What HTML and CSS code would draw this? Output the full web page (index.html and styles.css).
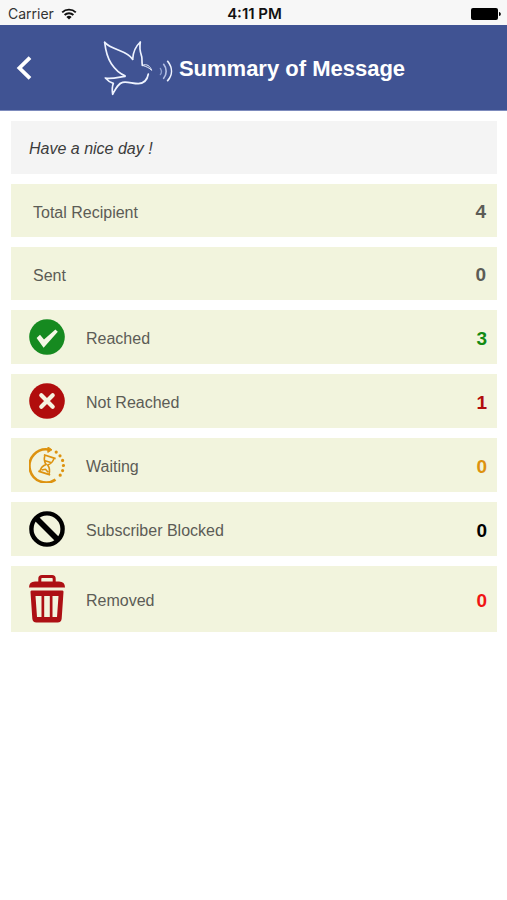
FILE: index.html
```html
<!DOCTYPE html>
<html lang="en">
<head>
<meta charset="utf-8">
<meta name="viewport" content="width=device-width, initial-scale=1">
<title>Summary of Message</title>
<link rel="stylesheet" href="styles.css">
</head>
<body>
<div class="status">
  <div class="carrier">
    <span>Carrier</span>
    <svg class="wifi" viewBox="0 0 16 12" aria-hidden="true">
      <path d="M1.2 4.4a9.8 9.8 0 0 1 13.6 0M3.6 7a6.3 6.3 0 0 1 8.8 0" fill="none" stroke="#111" stroke-width="1.9"/>
      <path d="M8 11.5 5.4 8.9a3.8 3.8 0 0 1 5.2 0z" fill="#111"/>
    </svg>
  </div>
  <time class="clock">4:11 PM</time>
  <svg class="battery" viewBox="0 0 30 12" aria-hidden="true">
    <rect width="27" height="12" rx="2"/>
    <path d="M28 4c2.4 0 2.4 4 0 4z"/>
  </svg>
</div>
<header class="bar">
  <button class="back" type="button" aria-label="Back">
    <svg viewBox="0 0 16 24" aria-hidden="true"><path d="M14 1.6 3.4 12 14 22.4" fill="none" stroke="#fff" stroke-width="3.8"/></svg>
  </button>
  <div class="brand">
    <svg class="bird" viewBox="30 30 213 168" fill="none" stroke="#eef3ff" stroke-linecap="round" stroke-linejoin="round" aria-hidden="true">
      <path d="M38 37C41 62 45 82 58 101C70 119 84 131 99 137" stroke-width="5"/>
      <path d="M38 37C60 61 107 61 122 88" stroke-width="5"/>
      <path d="M122 88C123 65 132 48 145 36C141 57 145 67 149 79C151 88 149 96 151 106" stroke-width="5"/>
      <path d="M151 106C165 100 174 108 179 121C172 114 165 110 151 106" stroke-width="3"/>
      <path d="M169 132C166 150 155 160 139 161C122 161 107 154 92 157C78 160 71 176 62 193C60 181 60 170 64 160C56 158 47 152 40 144C56 148 74 143 99 139" stroke-width="5"/>
      <path d="M205 115C209 121 209 129 205 134" stroke="#8fa0d0" stroke-width="4"/>
      <path d="M215 103C225 115 225 133 215 145" stroke="#b4c0e4" stroke-width="5"/>
      <path d="M227 94C242 113 242 135 227 152" stroke-width="5"/>
    </svg>
    <h1>Summary of Message</h1>
  </div>
</header>
<main>
  <p class="message">Have a nice day !</p>
  <dl class="stats">
    <div class="row plain"><dt>Total Recipient</dt><dd>4</dd></div>
    <div class="row plain"><dt>Sent</dt><dd>0</dd></div>
    <div class="row reached">
      <svg class="icon" viewBox="0 0 36 36" aria-hidden="true"><circle cx="18" cy="18" r="17.8" fill="#168a20"/><path d="M7.6 19 11 15.800 15 20.500 26.400 10.600 28.800 12.800 14.600 28.800z" fill="#f6f8e6"/></svg>
      <dt>Reached</dt><dd>3</dd>
    </div>
    <div class="row failed">
      <svg class="icon" viewBox="0 0 36 36" aria-hidden="true"><circle cx="18" cy="18" r="17.8" fill="#b10d0d"/><path d="m12.300 12.300 11.400 11.400m0-11.400L12.300 23.700" stroke="#f6f3e0" stroke-width="4.200" stroke-linecap="round"/></svg>
      <dt>Not Reached</dt><dd>1</dd>
    </div>
    <div class="row waiting">
      <svg class="icon" viewBox="0 0 36 36" fill="none" stroke="#dd920f" aria-hidden="true">
        <path d="M26.500 32.600A16.600 16.600 0 1 1 19.500 2.500" stroke-width="2.600"/>
        <path d="m19 0 4 2.800-4.200 2.600z" fill="#dd920f" stroke-width="1"/>
        <path d="M27.200 5.100h.01M31 8.800h.01M33.600 13.400h.01M34.400 18.500h.01M33.600 23.600h.01M31.200 28.200h.01" stroke-width="3.200" stroke-linecap="round"/>
        <g stroke-width="1.600" stroke-linejoin="round" transform="rotate(18 18 17.500)">
          <path d="M12 9.200h12.400M11.800 26.400h12.400" stroke-width="1.800"/>
          <path d="M13.200 9.500c0 4.500 1.200 6.300 4 8.300-2.800 2-4 4-4 8.300M22.800 9.500c0 4.500-1.200 6.300-4 8.300 2.800 2 4 4 4 8.300M15 14.500h6M14.500 24.500l3.500-2 3.500 2"/>
        </g>
      </svg>
      <dt>Waiting</dt><dd>0</dd>
    </div>
    <div class="row blocked">
      <svg class="icon" viewBox="0 0 36 36" fill="none" stroke="#000" aria-hidden="true"><circle cx="18" cy="18" r="15.600" stroke-width="4.400"/><path d="m7.500 7.500 21 21" stroke-width="5.600"/></svg>
      <dt>Subscriber Blocked</dt><dd>0</dd>
    </div>
    <div class="row removed">
      <svg class="icon bin" viewBox="0 0 36 48" aria-hidden="true">
        <path d="M10.800 8V3.800Q10.800 1.600 13 1.600h10Q25.200 1.600 25.200 3.800V8" fill="none" stroke="#ad1014" stroke-width="3"/>
        <path d="M0 12.500Q0 6.500 6 6.500H30Q36 6.500 36 12.500z" fill="#ad1014"/>
        <path fill-rule="evenodd" d="M2.500 15.500h31q1.200 0 1 1.500l-1.800 26.500q-.3 4-4.200 4h-21q-3.900 0-4.200-4L1.500 17q-.2-1.500 1-1.500zM6.500 21l1.500 21h4.500V21zM15.200 21v21h5.600V21zM23.500 21v21H28l1.500-21z" fill="#ad1014"/>
      </svg>
      <dt>Removed</dt><dd>0</dd>
    </div>
  </dl>
</main>
</body>
</html>
```
FILE: styles.css
```css
* { box-sizing: border-box; }

body {
  margin: 0;
  background: #fff;
  font-family: "Liberation Sans", Arial, sans-serif;
  color: #5c5c56;
}

.status {
  display: grid;
  grid-template-columns: 1fr auto 1fr;
  align-items: center;
  height: 25px;
  padding: 2px 6px 0 8px;
  background: #f7f7f7;
  font: 14px/20px Inter, sans-serif;
  color: #111;
}

.carrier { display: flex; align-items: center; gap: 7px; color: #333; }
.wifi { width: 16px; height: 12px; }
.clock { font-size: 15px; font-weight: 600; }
.battery { width: 30px; height: 12px; justify-self: end; }

.bar {
  display: grid;
  grid-template-columns: 1fr auto 1fr;
  align-items: center;
  height: 86px;
  background: #405393;
  border-bottom: 1px solid #7d8bbd;
}

.back {
  justify-self: start;
  display: flex;
  margin: 0;
  padding: 8px 16px;
  border: 0;
  background: none;
  cursor: pointer;
}
.back svg { width: 16px; height: 24px; }

.brand { display: flex; align-items: center; gap: 6px; }
.bird { width: 71px; height: 56px; }
h1 { margin: 0; padding-top: 3px; font-size: 22px; line-height: 28px; color: #fff; }

main { padding: 10px 10px 10px 11px; }

.message {
  margin: 0 0 10px;
  padding: 18px 18px 15px;
  background: #f4f4f4;
  font-size: 16px;
  line-height: 20px;
  font-style: italic;
  color: #3c3c3c;
}

.stats { display: grid; gap: 10px; margin: 0; }

.row {
  display: flex;
  align-items: center;
  min-height: 54px;
  padding: 9px 10px 9px 18px;
  background: #f2f4dd;
}
.plain { min-height: 53px; padding: 9px 11px 9px 22px; }

.icon { flex: none; width: 36px; height: 36px; margin-right: 21px; }
.bin { height: 48px; }

dt { padding-top: 4px; font-size: 16px; line-height: 20px; }
dd { margin: 0 0 0 auto; padding-top: 3px; font-size: 19px; line-height: 20px; font-weight: bold; }

.reached dd { color: #128a12; }
.failed dd { color: #b10d0d; }
.waiting dd { color: #dd920f; }
.blocked dd { color: #000; }
.removed dd { color: #f01414; }
```
